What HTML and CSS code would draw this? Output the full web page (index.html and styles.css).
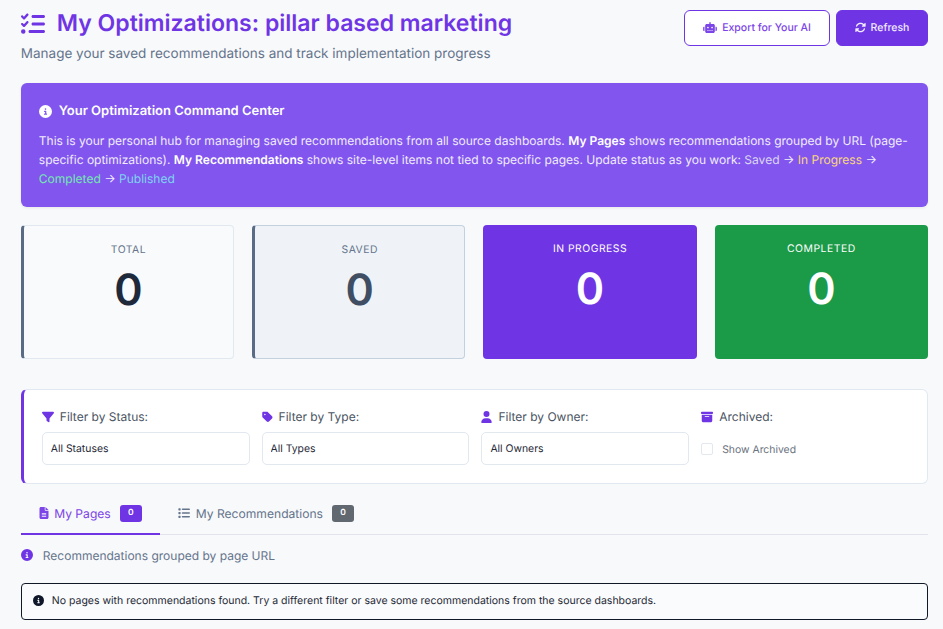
FILE: index.html
```html
<!DOCTYPE html>
<html lang="en">
<head>
<meta charset="utf-8">
<title>My Optimizations</title>
<link rel="stylesheet" href="styles.css">
</head>
<body>
<svg class="sprite" xmlns="http://www.w3.org/2000/svg">
<symbol id="i-info" viewBox="0 0 512 512"><path d="M256 512A256 256 0 1 0 256 0a256 256 0 1 0 0 512zM216 336h24V272H216c-13.3 0-24-10.7-24-24s10.7-24 24-24h48c13.3 0 24 10.7 24 24v88h8c13.3 0 24 10.7 24 24s-10.7 24-24 24H216c-13.3 0-24-10.7-24-24s10.7-24 24-24zm40-208a32 32 0 1 1 0 64 32 32 0 1 1 0-64z"/></symbol>
<symbol id="i-filter" viewBox="0 0 512 512"><path d="M3.9 54.9C10.5 40.9 24.5 32 40 32H472c15.5 0 29.5 8.9 36.1 22.9s4.6 30.5-5.2 42.5L320 320.9V448c0 12.1-6.8 23.2-17.7 28.6s-23.8 4.3-33.5-3l-64-48c-8.1-6-12.8-15.5-12.8-25.6V320.9L9 97.3C-.7 85.4-2.8 68.8 3.9 54.9z"/></symbol>
<symbol id="i-tag" viewBox="0 0 448 512"><path d="M0 80V229.5c0 17 6.7 33.3 18.7 45.3l176 176c25 25 65.5 25 90.5 0L418.7 317.3c25-25 25-65.5 0-90.5l-176-176c-12-12-28.3-18.7-45.3-18.7H48C21.5 32 0 53.5 0 80zm112 32a32 32 0 1 1 0 64 32 32 0 1 1 0-64z"/></symbol>
<symbol id="i-user" viewBox="0 0 448 512"><path d="M224 256A128 128 0 1 0 224 0a128 128 0 1 0 0 256zm-45.7 48C79.8 304 0 383.8 0 482.3C0 498.7 13.3 512 29.7 512H418.3c16.4 0 29.7-13.3 29.7-29.7C448 383.8 368.2 304 269.7 304H178.3z"/></symbol>
<symbol id="i-box" viewBox="0 0 512 512"><path d="M32 32H480c17.7 0 32 14.3 32 32V96c0 17.7-14.3 32-32 32H32C14.3 128 0 113.7 0 96V64C0 46.3 14.3 32 32 32zm0 128H480V416c0 35.3-28.7 64-64 64H96c-35.3 0-64-28.7-64-64V160zm128 80c0 8.8 7.2 16 16 16H336c8.8 0 16-7.2 16-16s-7.2-16-16-16H176c-8.8 0-16 7.2-16 16z"/></symbol>
<symbol id="i-file" viewBox="0 0 384 512"><path d="M64 0C28.7 0 0 28.7 0 64V448c0 35.3 28.7 64 64 64H320c35.3 0 64-28.7 64-64V160H256c-17.7 0-32-14.3-32-32V0H64zM256 0V128H384L256 0zM112 256H272c8.8 0 16 7.2 16 16s-7.2 16-16 16H112c-8.8 0-16-7.2-16-16s7.2-16 16-16zm0 64H272c8.8 0 16 7.2 16 16s-7.2 16-16 16H112c-8.8 0-16-7.2-16-16s7.2-16 16-16zm0 64H272c8.8 0 16 7.2 16 16s-7.2 16-16 16H112c-8.8 0-16-7.2-16-16s7.2-16 16-16z"/></symbol>
<symbol id="i-list" viewBox="0 0 512 512"><path d="M40 48C26.7 48 16 58.7 16 72v48c0 13.3 10.7 24 24 24H88c13.3 0 24-10.7 24-24V72c0-13.3-10.7-24-24-24H40zM192 64c-17.7 0-32 14.3-32 32s14.3 32 32 32H480c17.7 0 32-14.3 32-32s-14.3-32-32-32H192zm0 160c-17.7 0-32 14.3-32 32s14.3 32 32 32H480c17.7 0 32-14.3 32-32s-14.3-32-32-32H192zm0 160c-17.7 0-32 14.3-32 32s14.3 32 32 32H480c17.7 0 32-14.3 32-32s-14.3-32-32-32H192zM16 232v48c0 13.3 10.7 24 24 24H88c13.3 0 24-10.7 24-24V232c0-13.3-10.7-24-24-24H40c-13.3 0-24 10.7-24 24zM40 368c-13.3 0-24 10.7-24 24v48c0 13.3 10.7 24 24 24H88c13.3 0 24-10.7 24-24V392c0-13.3-10.7-24-24-24H40z"/></symbol>
<symbol id="i-listcheck" viewBox="0 0 512 512"><path d="M152.1 38.2c9.9 8.9 10.7 24 1.8 33.9l-72 80c-4.4 4.9-10.6 7.8-17.2 7.9s-12.9-2.4-17.6-7L7 113C-2.3 103.6-2.3 88.4 7 79s24.6-9.4 33.9 0l22.1 22.1 55.1-61.2c8.9-9.9 24-10.7 33.9-1.8zm0 160c9.9 8.9 10.7 24 1.8 33.9l-72 80c-4.4 4.9-10.6 7.8-17.2 7.9s-12.9-2.4-17.6-7L7 273c-9.4-9.4-9.4-24.6 0-33.9s24.6-9.4 33.9 0l22.1 22.1 55.1-61.2c8.9-9.9 24-10.7 33.9-1.8zM224 96c0-17.7 14.3-32 32-32H480c17.7 0 32 14.3 32 32s-14.3 32-32 32H256c-17.7 0-32-14.3-32-32zm0 160c0-17.7 14.3-32 32-32H480c17.7 0 32 14.3 32 32s-14.3 32-32 32H256c-17.7 0-32-14.3-32-32zM160 416c0-17.7 14.3-32 32-32H480c17.7 0 32 14.3 32 32s-14.3 32-32 32H192c-17.7 0-32-14.3-32-32zM48 368a48 48 0 1 1 0 96 48 48 0 1 1 0-96z"/></symbol>
<symbol id="i-robot" viewBox="0 0 640 512"><path d="M320 0c17.7 0 32 14.3 32 32V96H472c39.8 0 72 32.2 72 72V440c0 39.8-32.2 72-72 72H168c-39.8 0-72-32.2-72-72V168c0-39.8 32.2-72 72-72H288V32c0-17.7 14.3-32 32-32zM208 384c-8.8 0-16 7.2-16 16s7.2 16 16 16h32c8.8 0 16-7.2 16-16s-7.2-16-16-16H208zm96 0c-8.8 0-16 7.2-16 16s7.2 16 16 16h32c8.8 0 16-7.2 16-16s-7.2-16-16-16H304zm96 0c-8.8 0-16 7.2-16 16s7.2 16 16 16h32c8.8 0 16-7.2 16-16s-7.2-16-16-16H400zM264 256a40 40 0 1 0 -80 0 40 40 0 1 0 80 0zm152 40a40 40 0 1 0 0-80 40 40 0 1 0 0 80zM48 224H64V416H48c-26.5 0-48-21.5-48-48V272c0-26.5 21.5-48 48-48zm544 0c26.5 0 48 21.5 48 48v96c0 26.5-21.5 48-48 48H576V224h16z"/></symbol>
<symbol id="i-sync" viewBox="0 0 512 512"><path d="M142.9 142.9c62.2-62.2 162.7-62.5 225.3-1L327 183c-6.9 6.9-8.9 17.2-5.2 26.2s12.5 14.8 22.2 14.8H463.5c0 0 0 0 0 0H472c13.3 0 24-10.7 24-24V72c0-9.7-5.8-18.5-14.8-22.2s-19.3-1.7-26.2 5.2L413.4 96.6c-87.6-86.5-228.7-86.2-315.8 1C73.2 122 55.6 150.7 44.8 181.4c-5.9 16.7 2.9 34.9 19.5 40.8s34.9-2.9 40.8-19.5c7.7-21.8 20.2-42.3 37.8-59.8zM16 312v7.6 .7V440c0 9.7 5.8 18.5 14.8 22.2s19.3 1.7 26.2-5.2l41.6-41.6c87.6 86.5 228.7 86.2 315.8-1c24.4-24.4 42.1-53.1 52.9-83.7c5.9-16.7-2.9-34.9-19.5-40.8s-34.9 2.9-40.8 19.5c-7.7 21.8-20.2 42.3-37.8 59.8c-62.2 62.2-162.7 62.5-225.3 1L185 329c6.9-6.9 8.9-17.2 5.2-26.2s-12.5-14.8-22.2-14.8H48.4h-.7H40c-13.3 0-24 10.7-24 24z"/></symbol>
</svg>

<main class="page">
  <header class="top">
    <div>
      <h1 class="title"><svg class="title-icon"><use href="#i-listcheck"/></svg>My Optimizations: pillar based marketing</h1>
      <p class="subtitle">Manage your saved recommendations and track implementation progress</p>
    </div>
    <div class="actions">
      <button class="btn btn-outline"><svg class="btn-robot"><use href="#i-robot"/></svg>Export for Your AI</button>
      <button class="btn btn-solid"><svg class="btn-icon"><use href="#i-sync"/></svg>Refresh</button>
    </div>
  </header>

  <section class="banner">
    <h2 class="banner-title"><svg class="banner-icon"><use href="#i-info"/></svg>Your Optimization Command Center</h2>
    <p class="banner-text">This is your personal hub for managing saved recommendations from all source dashboards. <strong>My Pages</strong> shows recommendations grouped by URL (page-specific optimizations). <strong>My Recommendations</strong> shows site-level items not tied to specific pages. Update status as you work: <span class="s-saved">Saved</span> → <span class="s-progress">In Progress</span> → <span class="s-completed">Completed</span> → <span class="s-published">Published</span></p>
  </section>

  <section class="stats">
    <div class="stat stat-total"><div class="stat-label">TOTAL</div><div class="stat-value">0</div></div>
    <div class="stat stat-saved"><div class="stat-label">SAVED</div><div class="stat-value">0</div></div>
    <div class="stat stat-progress"><div class="stat-label">IN PROGRESS</div><div class="stat-value">0</div></div>
    <div class="stat stat-completed"><div class="stat-label">COMPLETED</div><div class="stat-value">0</div></div>
  </section>

  <section class="filters">
    <div class="filter">
      <label class="filter-label"><svg class="f-icon"><use href="#i-filter"/></svg>Filter by Status:</label>
      <select class="select"><option>All Statuses</option></select>
    </div>
    <div class="filter">
      <label class="filter-label"><svg class="f-icon f-icon-narrow"><use href="#i-tag"/></svg>Filter by Type:</label>
      <select class="select"><option>All Types</option></select>
    </div>
    <div class="filter">
      <label class="filter-label"><svg class="f-icon f-icon-narrow"><use href="#i-user"/></svg>Filter by Owner:</label>
      <select class="select"><option>All Owners</option></select>
    </div>
    <div class="filter">
      <label class="filter-label"><svg class="f-icon"><use href="#i-box"/></svg>Archived:</label>
      <label class="check"><span class="check-box"></span>Show Archived</label>
    </div>
  </section>

  <nav class="tabs">
    <div class="tab tab-active"><svg class="tab-icon"><use href="#i-file"/></svg>My Pages<span class="count count-active">0</span></div>
    <div class="tab"><svg class="tab-icon tab-icon-list"><use href="#i-list"/></svg>My Recommendations<span class="count">0</span></div>
  </nav>

  <p class="hint"><svg class="hint-icon"><use href="#i-info"/></svg>Recommendations grouped by page URL</p>

  <div class="alert"><svg class="alert-icon"><use href="#i-info"/></svg>No pages with recommendations found. Try a different filter or save some recommendations from the source dashboards.</div>
</main>
</body>
</html>
```

FILE: styles.css
```css
* { box-sizing: border-box; }
html, body { margin: 0; padding: 0; }
body { background: #f8f9fb; font-family: Inter, "Liberation Sans", sans-serif; color: #1e293b; overflow: hidden; text-rendering: geometricPrecision; }
.sprite { display: none; }
svg { fill: currentColor; flex: none; }

.page { padding: 0 15px 0 20.8px; }

.top { display: flex; justify-content: space-between; align-items: flex-start; height: 83px; padding-top: 9px; }
.title { margin: 0; font-size: 23.04px; line-height: 29px; font-weight: 600; color: #6f35e5; display: flex; align-items: center; }
.title-icon { width: 24px; height: 24px; margin-right: 12px; }
.subtitle { margin: 6px 0 0; font-size: 13.5px; line-height: 20px; color: #64748b; }
.actions { display: flex; gap: 6px; padding-top: 1px; }
.btn { height: 36px; border-radius: 6px; font-family: inherit; font-size: 10.5px; font-weight: 500; display: flex; align-items: center; justify-content: center; padding: 0 0 1px; text-rendering: geometricPrecision; }
.btn-outline { width: 146px; background: #fff; border: 1px solid #6f35e5; color: #7c45e8; }
.btn-solid { width: 92px; background: #6f35e5; border: 1px solid #6f35e5; color: #f1ebfd; }
.btn-robot { width: 14px; height: 11px; margin-right: 5px; }
.btn-icon { width: 11px; height: 11px; margin-right: 5px; }

.banner { height: 124px; border-radius: 6px; background: #8155ee; color: #fff; padding: 19px 18px 0; box-shadow: 0 1px 3px rgba(15,23,42,.08); }
.banner-title { margin: 0 0 11px; font-size: 13px; line-height: 18px; font-weight: 600; display: flex; align-items: center; }
.banner-icon { width: 13px; height: 13px; margin-right: 7px; }
.banner-text { margin: 0; font-size: 12.02px; line-height: 19.2px; color: #f1ecfe; }
.banner-text strong { font-weight: 600; color: #fff; }
.s-saved { color: #dcd6f4; }
.s-progress { color: #fcd77c; }
.s-completed { color: #73e8b0; }
.s-published { color: #7fd4f5; }

.stats { display: grid; grid-template-columns: repeat(4, 1fr); gap: 18px; margin-top: 18px; }
.stat { height: 134px; border-radius: 4px; text-align: center; padding-top: 17px; }
.stat-label { font-size: 10.4px; line-height: 14px; letter-spacing: .5px; font-weight: 400; }
.stat-value { font-size: 43px; line-height: 53px; font-weight: 600; margin-top: 7px; }
.stat-total { background: #f9fafb; border: 1px solid #e2e8f0; border-left: 3px solid #5a6b85; }
.stat-total .stat-label { color: #64748b; }
.stat-total .stat-value { color: #1e293b; }
.stat-saved { background: #eff3f8; border: 1px solid #c3d0de; border-left: 3px solid #5a6b85; }
.stat-saved .stat-label { color: #64748b; }
.stat-saved .stat-value { color: #3f4e63; }
.stat-progress { background: #6f35e5; color: #fff; }
.stat-completed { background: #1b9a48; color: #fff; }

.filters { display: grid; grid-template-columns: repeat(4, 1fr); column-gap: 12px; height: 95px; margin-top: 30px; padding: 18px 18px 0; background: #fff; border: 1px solid #e2e8f0; border-left: 3px solid #6f35e5; border-radius: 6px; }
.filter-label { display: flex; align-items: center; height: 17px; font-size: 12px; font-weight: 400; color: #4b5563; }
.f-icon { width: 12px; height: 12px; margin-right: 6px; color: #6f35e5; }
.f-icon-narrow { width: 11px; }
.select { display: block; width: 100%; height: 33px; margin-top: 7px; padding: 0 8px; background: #fff; border: 1px solid #e2e8f0; border-radius: 5px; font-family: inherit; font-size: 10.4px; color: #1f2937; appearance: none; text-rendering: geometricPrecision; }
.check { display: flex; align-items: center; height: 33px; margin-top: 7px; padding-top: 1px; font-size: 10.4px; color: #6b7280; }
.check-box { width: 12px; height: 12px; margin-right: 9px; background: #fff; border: 1px solid #e2e8f0; border-radius: 2px; }

.tabs { display: flex; height: 40px; margin-top: 11px; border-bottom: 1px solid #e2e4ec; }
.tab { display: flex; align-items: center; height: 40px; padding: 0 18px 2px; font-size: 12.1px; font-weight: 400; color: #64748b; border-bottom: 2px solid transparent; }
.tab-active { color: #7c45e8; border-bottom-color: #6f35e5; padding-left: 18.4px; }
.tab-icon { width: 10px; height: 12px; margin-right: 5px; }
.tab-icon-list { width: 12px; margin-right: 6px; }
.count { display: flex; align-items: center; justify-content: center; width: 22px; height: 17px; margin-left: 9px; border-radius: 3px; background: #616870; color: #fff; font-size: 8.5px; font-weight: 600; }
.count-active { background: #6f35e5; }

.hint { display: flex; align-items: center; height: 16px; margin: 12px 0 0; font-size: 12px; color: #64748b; }
.hint-icon { width: 12px; height: 12px; margin-right: 10px; color: #6f35e5; }

.alert { display: flex; align-items: center; height: 37px; margin-top: 20px; padding: 0 0 2px 11px; border: 1px solid #111827; border-radius: 4px; background: #fafbfc; font-size: 10.5px; color: #1f2937; }
.alert-icon { width: 11px; height: 11px; margin-right: 8px; color: #0f172a; }
```
